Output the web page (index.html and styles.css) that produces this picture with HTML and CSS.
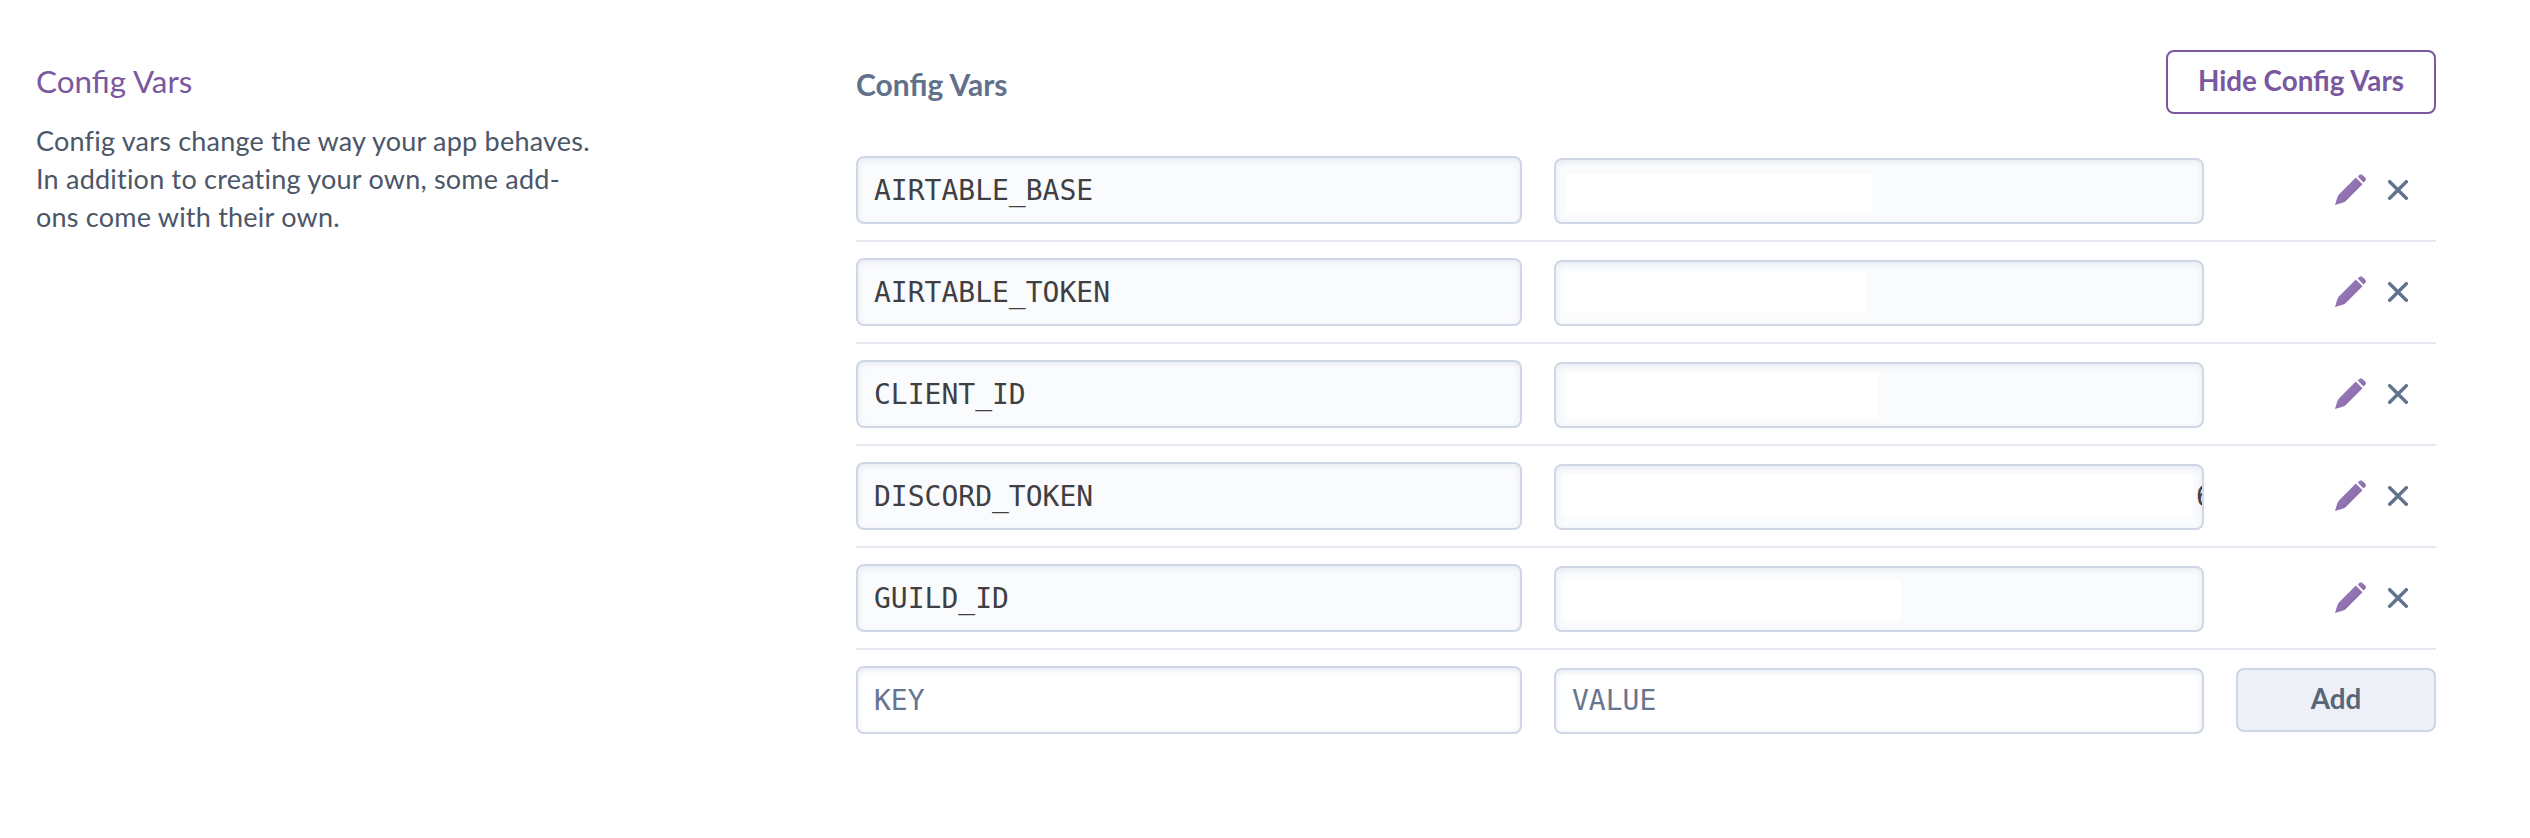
FILE: index.html
```html
<!DOCTYPE html>
<html lang="en">
<head>
<meta charset="utf-8">
<title>Config Vars</title>
<link rel="stylesheet" href="styles.css">
</head>
<body>
<svg class="sprite" width="0" height="0">
  <defs>
    <linearGradient id="violet" x1="0" y1="0" x2="1" y2="1">
      <stop offset="0" stop-color="#9c85c0"/>
      <stop offset="1" stop-color="#8560a3"/>
    </linearGradient>
  </defs>
  <symbol id="pencil" viewBox="0 0 32 32">
    <path fill="url(#violet)" d="M0 31 L2.2 23.5 Q3 21.3 4.6 19.7 L20.8 3.5 L27.5 10.2 L11.3 26.4 Q9.7 28 7.5 28.8 Z"/>
    <path fill="url(#violet)" d="M22.6 2.6 L24.2 1 Q25.7 -.2 27.4 .9 Q29.4 2.3 30.6 4.2 Q31.3 5.6 30.2 6.8 L28.6 8.6 Z"/>
  </symbol>
  <symbol id="cross" viewBox="0 0 20 20">
    <path d="M1.7 1.7 L18.3 18.3 M18.3 1.7 L1.7 18.3" fill="none" stroke="#62738d" stroke-width="3.4" stroke-linecap="round"/>
  </symbol>
</svg>
<main class="settings">
  <aside class="intro">
    <h2 class="intro-title">Config Vars</h2>
    <p class="intro-text">Config vars change the way your app behaves.<br>In addition to creating your own, some add-<br>ons come with their own.</p>
  </aside>
  <section class="vars">
    <header class="vars-head">
      <h3 class="vars-title">Config Vars</h3>
      <button class="btn btn-hide">Hide Config Vars</button>
    </header>
    <div class="row">
      <div class="field key">AIRTABLE_BASE</div>
      <div class="field value"><span class="mask mask-base"></span></div>
      <div class="actions"><svg class="pencil"><use href="#pencil"/></svg><svg class="cross"><use href="#cross"/></svg></div>
    </div>
    <div class="row">
      <div class="field key">AIRTABLE_TOKEN</div>
      <div class="field value"><span class="mask mask-token"></span></div>
      <div class="actions"><svg class="pencil"><use href="#pencil"/></svg><svg class="cross"><use href="#cross"/></svg></div>
    </div>
    <div class="row">
      <div class="field key">CLIENT_ID</div>
      <div class="field value"><span class="mask mask-client"></span></div>
      <div class="actions"><svg class="pencil"><use href="#pencil"/></svg><svg class="cross"><use href="#cross"/></svg></div>
    </div>
    <div class="row">
      <div class="field key">DISCORD_TOKEN</div>
      <div class="field value"><span class="mask mask-discord"></span><span class="tail">6</span></div>
      <div class="actions"><svg class="pencil"><use href="#pencil"/></svg><svg class="cross"><use href="#cross"/></svg></div>
    </div>
    <div class="row">
      <div class="field key">GUILD_ID</div>
      <div class="field value"><span class="mask mask-guild"></span></div>
      <div class="actions"><svg class="pencil"><use href="#pencil"/></svg><svg class="cross"><use href="#cross"/></svg></div>
    </div>
    <div class="row row-new">
      <div class="field key empty">KEY</div>
      <div class="field value empty"><span class="hint">VALUE</span></div>
      <button class="btn btn-add">Add</button>
    </div>
  </section>
</main>
</body>
</html>
```
FILE: styles.css
```css
* { box-sizing: border-box; }
body { margin: 0; background: #fff; font-family: Lato, "Open Sans", sans-serif; }
h2, h3, p { margin: 0; font-weight: 400; }
.sprite { display: block; height: 0; }
.settings { display: grid; grid-template-columns: 820px 1580px; padding: 50px 0 0 36px; }
.intro { padding-top: 13px; }
.intro-title { font-size: 31.4px; line-height: 36px; color: #79589f; }
.intro-text { margin-top: 23px; font-size: 27px; line-height: 38px; letter-spacing: .22px; color: #4b5669; white-space: nowrap; }
.vars-head { display: flex; justify-content: space-between; align-items: flex-start; height: 90px; }
.vars-title { margin-top: 16px; font-size: 30px; line-height: 36px; font-weight: 700; color: #62718a; }
.btn { height: 64px; border-radius: 8px; font: 700 27.8px/34px Lato, sans-serif; padding: 0 0 2px; }
.btn-hide { width: 270px; border: 2px solid #79589f; background: #fff; color: #79589f; }
.btn-add { width: 200px; border: 2px solid #cfd7e6; background: #edf0f6; color: #596579; margin-top: 2px; }
.row { display: grid; grid-template-columns: 666px 650px 200px; column-gap: 32px; align-items: start; height: 102px; padding-top: 16px; border-bottom: 2px solid #e5e8f3; }
.row-new { border-bottom: 0; }
.field { display: flex; border: 2px solid #cfd7e6; border-radius: 8px; background: #fafbfd; box-shadow: inset 0 2px 6px #e6eaf2; font: 28px/33px "DejaVu Sans Mono", monospace; color: #3f3f44; overflow: hidden; }
.key { height: 68px; padding: 16px 16px 15px; }
.value { height: 66px; margin-top: 2px; }
.empty { background: #fff; color: #67768f; }
.hint { margin: 14px 16px; }
.mask { flex: none; background: #fff; }
.mask-base { width: 306px; height: 38px; margin: 14px 0 0 10px; }
.mask-token { width: 303px; height: 41px; margin: 10px 0 0 8px; }
.mask-client { width: 312px; height: 47px; margin: 8px 0 0 11px; }
.mask-discord { width: 630px; height: 42px; margin: 9px 0 0 7px; }
.mask-guild { width: 338px; height: 41px; margin: 12px 0 0 7px; }
.tail { margin: 14px 0 0 3px; }
.actions { display: flex; align-items: center; gap: 21px; height: 68px; padding-left: 99px; }
.pencil { width: 32px; height: 32px; }
.cross { width: 20px; height: 20px; }
```
